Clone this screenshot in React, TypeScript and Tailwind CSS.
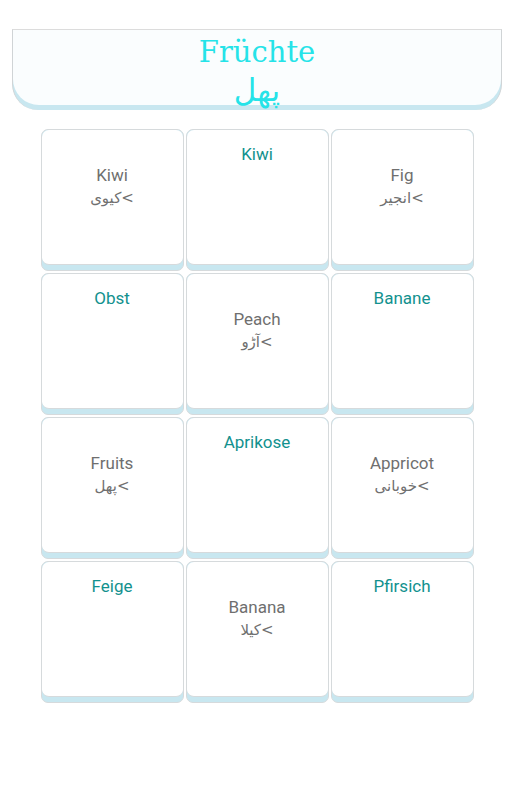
import React from 'react';

type Card = { en: string; ur?: string; open: boolean };

const cards: Card[] = [
  { en: 'Kiwi', ur: 'کیوی<', open: true },
  { en: 'Kiwi', open: false },
  { en: 'Fig', ur: 'انجیر<', open: true },
  { en: 'Obst', open: false },
  { en: 'Peach', ur: 'آڑو<', open: true },
  { en: 'Banane', open: false },
  { en: 'Fruits', ur: 'پھل<', open: true },
  { en: 'Aprikose', open: false },
  { en: 'Appricot', ur: 'خوبانی<', open: true },
  { en: 'Feige', open: false },
  { en: 'Banana', ur: 'کیلا<', open: true },
  { en: 'Pfirsich', open: false },
];

const Tile: React.FC<{ card: Card }> = ({ card }) => (
  <div className="h-[142px] rounded-[7px] border border-[#d6dadc] bg-[#c8e7f0] pb-[5px]">
    <div className="h-full rounded-[7px] border-b border-[#d6dadc] bg-white text-center font-['Roboto',sans-serif]">
      {card.open ? (
        <div className="pt-[34px]">
          <div className="text-[17px] leading-[22px] text-[#6f6f6f]">{card.en}</div>
          <div dir="ltr" className="mt-[1px] font-['DejaVu_Sans',sans-serif] text-[15px] leading-[22px] text-[#707070]">
            {card.ur}
          </div>
        </div>
      ) : (
        <div className="pt-[13px] text-[17px] leading-[22px] text-[#12918e]">{card.en}</div>
      )}
    </div>
  </div>
);

const App: React.FC = () => {
  return (
    <div className="min-h-[800px] bg-white pt-[29px]">
      {/* Kopfzeile */}
      <div className="mx-[12px] h-[81px] rounded-b-[26px] border border-t-[#dcdcdc] border-x-[#d0d4d6] border-b-0 bg-[#c8e7f0] pb-[5px]">
        <div className="flex h-full flex-col items-center rounded-b-[26px] bg-[#fafdfe]">
          <div className="mt-[3px] font-['DejaVu_Serif',serif] text-[29px] leading-[38px] text-[#25e3e8]">Früchte</div>
          <div className="relative mt-[2px] font-['DejaVu_Sans',sans-serif] text-[31px] leading-[34px] text-[#25e3e8]">پھل</div>
        </div>
      </div>

      <div className="mx-auto mt-[19px] grid w-[433px] grid-cols-3 gap-[2px]">
        {cards.map((c, i) => (
          <Tile key={i} card={c} />
        ))}
      </div>
    </div>
  );
};

export default App;
